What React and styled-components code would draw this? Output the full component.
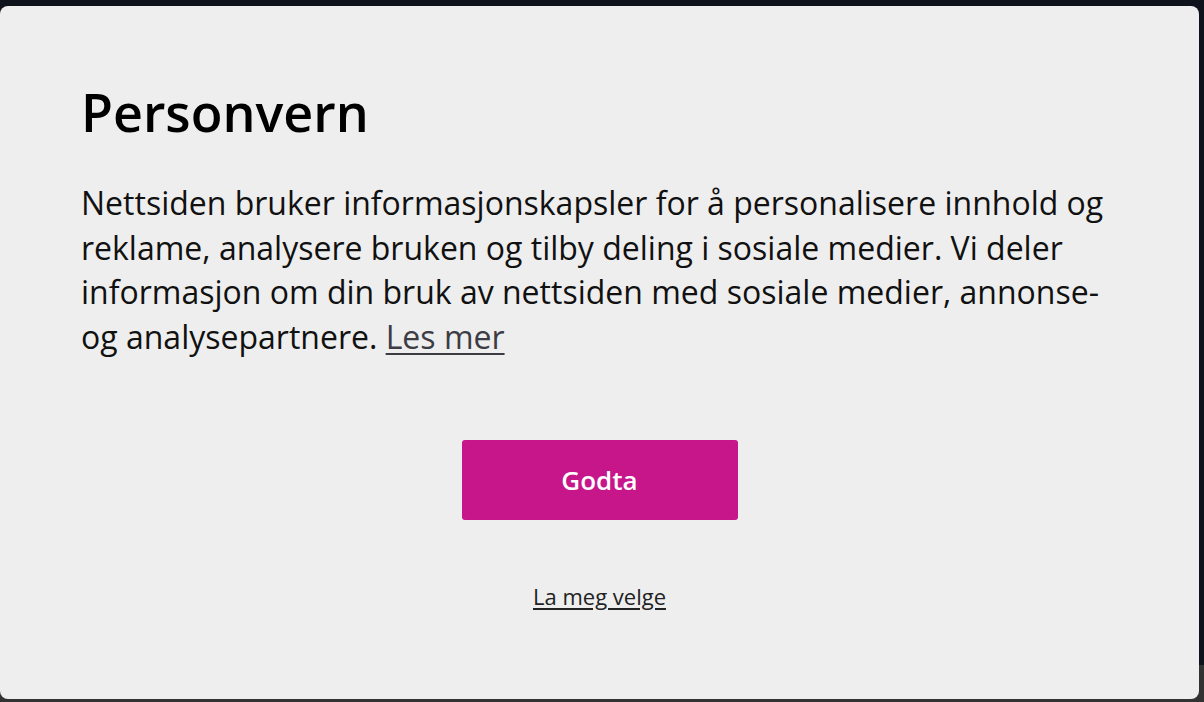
import React from "react";
import styled, { createGlobalStyle } from "styled-components";

const Global = createGlobalStyle`
  html, body { margin: 0; padding: 0; }
  body {
    width: 1204px;
    height: 702px;
    overflow: hidden;
    background: linear-gradient(to bottom, #0e121b 0, #0e121b 665px, #323232 665px, #323232 100%);
    font-family: "Open Sans", "Noto Sans", sans-serif;
  }
`;

const Page = styled.div`
  display: flex;
  align-items: flex-start;
  padding-top: 6px;
  height: 702px;
  box-sizing: border-box;
`;

const Card = styled.section`
  width: 1199px;
  height: 693px;
  box-sizing: border-box;
  background: #eeeeee;
  border-radius: 8px;
  padding: 72px 81px 0 81px;
  display: flex;
  flex-direction: column;
`;

const Title = styled.h1`
  margin: 0;
  font-size: 52px;
  line-height: 68px;
  font-weight: 600;
  color: #000;
`;

const Body = styled.p`
  margin: 35px 0 0 0;
  font-size: 32px;
  line-height: 44.5px;
  color: #111;
  font-weight: 400;
`;

const Link = styled.a`
  color: #3c3c44;
  text-decoration: underline;
  text-underline-offset: 4px;
  text-decoration-thickness: 2px;
`;

const Actions = styled.div`
  display: flex;
  flex-direction: column;
  align-items: center;
  margin-top: 81px;
`;

const Primary = styled.button`
  width: 276px;
  height: 80px;
  border: none;
  border-radius: 3px;
  background: #c6168a;
  color: #fff;
  font-family: inherit;
  font-size: 26px;
  font-weight: 600;
  cursor: pointer;
`;

const Secondary = styled.a`
  margin-top: 61px;
  font-size: 22px;
  color: #222;
  text-decoration: underline;
  text-underline-offset: 3px;
  line-height: 30px;
`;

export default function App() {
  return (
    <>
      <Global />
      <Page>
        <Card>
          <Title>Personvern</Title>
          <Body>
            Nettsiden bruker informasjonskapsler for å personalisere innhold og
            reklame, analysere bruken og tilby deling i sosiale medier. Vi deler
            informasjon om din bruk av nettsiden med sosiale medier, annonse- og
            analysepartnere. <Link href="#">Les mer</Link>
          </Body>
          <Actions>
            <Primary>Godta</Primary>
            <Secondary href="#">La meg velge</Secondary>
          </Actions>
        </Card>
      </Page>
    </>
  );
}
